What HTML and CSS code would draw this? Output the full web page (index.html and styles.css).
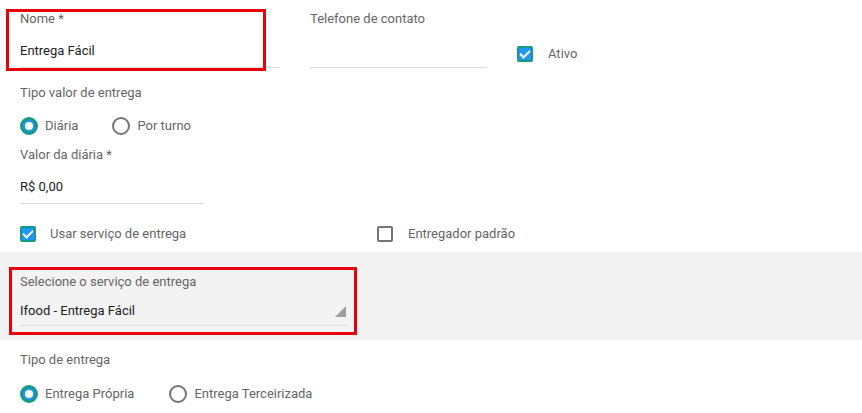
FILE: index.html
```html
<!DOCTYPE html>
<html>
<head>
  <meta charset="utf-8">
  <meta name="viewport" content="width=device-width">
  <title>Entregador</title>
  <link rel="stylesheet" href="styles.css">
</head>
<body>
<main class="form">

  <section class="row-top">
    <div class="field f-nome">
      <label>Nome *</label>
      <div class="value">Entrega Fácil</div>
    </div>
    <div class="field f-tel">
      <label>Telefone de contato</label>
      <div class="value"></div>
    </div>
    <div class="check ativo">
      <span class="box on"></span>
      <span>Ativo</span>
    </div>
  </section>

  <section class="group g-tipo">
    <p class="caption">Tipo valor de entrega</p>
    <div class="radios">
      <div class="radio"><span class="dot on"></span><span>Diária</span></div>
      <div class="radio"><span class="dot"></span><span>Por turno</span></div>
    </div>
  </section>

  <div class="field f-valor">
    <label>Valor da diária *</label>
    <div class="value">R$ 0,00</div>
  </div>

  <section class="checks">
    <div class="check"><span class="box on"></span><span>Usar serviço de entrega</span></div>
    <div class="check"><span class="box"></span><span>Entregador padrão</span></div>
  </section>

  <section class="band">
    <div class="field f-servico">
      <label>Selecione o serviço de entrega</label>
      <div class="value">Ifood - Entrega Fácil<span class="arrow"></span></div>
    </div>
  </section>

  <section class="group g-entrega">
    <p class="caption">Tipo de entrega</p>
    <div class="radios">
      <div class="radio r-propria"><span class="dot on"></span><span>Entrega Própria</span></div>
      <div class="radio"><span class="dot"></span><span>Entrega Terceirizada</span></div>
    </div>
  </section>

  <!-- highlight boxes drawn over the form -->
  <div class="mark mark-nome"></div>
  <div class="mark mark-servico"></div>
</main>
</body>
</html>
```

FILE: styles.css
```css
* {
  box-sizing: border-box;
}

body {
  margin: 0;
  background: #fff;
  font-family: Roboto, "Liberation Sans", sans-serif;
  font-size: 13px;
  color: #222;
}

.form {
  position: relative;
  width: 862px;
  height: 413px;
  overflow: hidden;
}

label, .caption {
  display: block;
  margin: 0;
  line-height: 16px;
  color: #666;
}

.field .value {
  position: relative;
  margin-top: 16px;
  height: 25px;
  line-height: 16px;
  padding-bottom: 8px;
  border-bottom: 1px solid #ddd;
}

.row-top {
  display: flex;
  align-items: flex-start;
  padding: 11px 0 0 20px;
}

.f-nome {
  width: 260px;
}

.f-tel {
  width: 177px;
  margin-left: 30px;
}

.ativo {
  margin: 35px 0 0 30px;
}

.ativo .box {
  margin-right: 15px;
}

.check {
  display: flex;
  align-items: center;
  color: #666;
  line-height: 16px;
}

.box {
  width: 16px;
  height: 16px;
  border: 2px solid #757575;
  border-radius: 2px;
  margin-right: 14px;
  flex: none;
  position: relative;
}

.box.on {
  background: #2196f3;
  border-color: #16998b;
}

.box.on::after {
  content: "";
  position: absolute;
  left: 3px;
  top: 0px;
  width: 4px;
  height: 8px;
  border: solid #fff;
  border-width: 0 2px 2px 0;
  transform: rotate(45deg);
}

.group {
  padding-left: 20px;
}

.g-tipo {
  margin-top: 17px;
}

.radios {
  display: flex;
  margin-top: 16px;
}

.radio {
  display: flex;
  align-items: center;
  color: #666;
  line-height: 18px;
  margin-right: 34px;
}

.dot {
  width: 18px;
  height: 18px;
  border-radius: 50%;
  border: 2px solid #757575;
  margin-right: 7px;
  flex: none;
  position: relative;
}

.dot.on {
  border: 3px solid #16998b;
  background: #2196f3;
}

.dot.on::after {
  content: "";
  position: absolute;
  left: 2px;
  top: 2px;
  width: 8px;
  height: 8px;
  border-radius: 50%;
  background: #fff;
}

.f-valor {
  width: 184px;
  margin: 12px 0 0 20px;
}

.f-valor .value {
  margin-top: 16px;
}

.checks {
  display: flex;
  margin-top: 22px;
  padding-left: 20px;
}

.checks .check:first-child {
  width: 357px;
}

.checks .check:last-child .box {
  margin-right: 15px;
}

.band {
  margin-top: 10px;
  height: 88px;
  background: #f3f3f3;
  padding: 22px 0 0 20px;
}

.f-servico {
  width: 327px;
}

.f-servico .value {
  margin-top: 13px;
  height: 23px;
  padding-bottom: 6px;
}

.arrow {
  position: absolute;
  right: 1px;
  top: 3px;
  width: 0;
  height: 0;
  border-left: 11px solid transparent;
  border-bottom: 11px solid #9e9e9e;
}

.g-entrega {
  margin-top: 12px;
}

.g-entrega .radios {
  margin-top: 17px;
}

.r-propria {
  margin-right: 35px;
}

.mark {
  position: absolute;
  border: 3px solid #e8000b;
}

.mark-nome {
  left: 6px;
  top: 9px;
  width: 260px;
  height: 62px;
}

.mark-servico {
  left: 9px;
  top: 267px;
  width: 348px;
  height: 68px;
}
```
